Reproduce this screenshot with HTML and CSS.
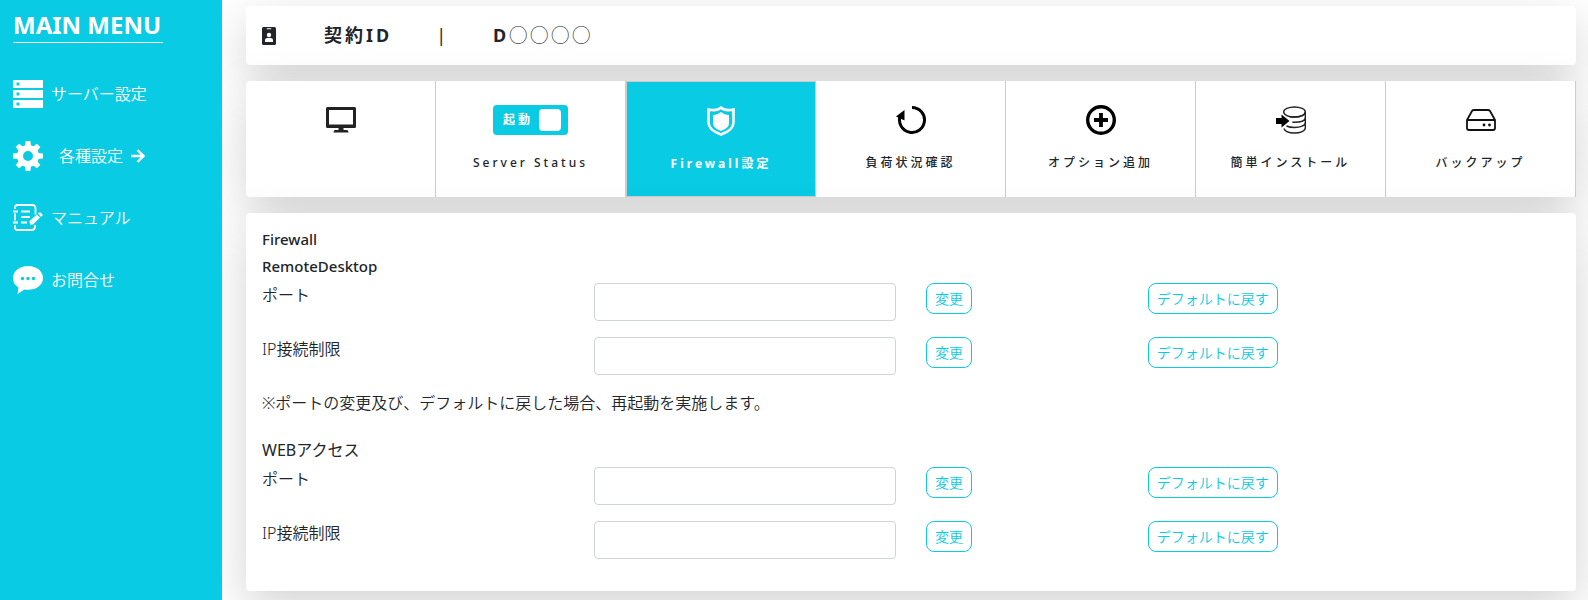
FILE: index.html
```html
<!DOCTYPE html>
<html lang="ja">
<head>
<meta charset="utf-8">
<meta name="viewport" content="width=device-width, initial-scale=1">
<title>Firewall設定</title>
<link rel="stylesheet" href="styles.css">
</head>
<body>
<div class="layout">
  <nav class="sidebar">
    <h1 class="sidebar-title">MAIN MENU</h1>
    <ul class="menu">
      <li><a class="menu-link" href="#">
        <svg class="menu-icon" viewBox="0 0 30 30" fill="#fff"><path fill-rule="evenodd" d="M0 1h30v8H0zM3.500 3.500v3h3v-3zM0 11h30v8H0zM3.500 13.500v3h3v-3zM0 21h30v8H0zM3.500 23.500v3h3v-3z"/></svg>
        <span>サーバー設定</span></a></li>
      <li><a class="menu-link" href="#">
        <svg class="menu-icon" viewBox="0 0 30 30"><g fill="#fff"><circle cx="15" cy="15" r="11"/><path id="tooth" d="M12 5L12.600 0h4.800L18 5v20l-.6 5h-4.800L12 25z"/><use href="#tooth" transform="rotate(45 15 15)"/><use href="#tooth" transform="rotate(90 15 15)"/><use href="#tooth" transform="rotate(135 15 15)"/></g><circle cx="15" cy="15" r="5" fill="#0acbe4"/></svg>
        <span class="menu-sub">各種設定</span>
        <svg class="menu-arrow" viewBox="0 0 14 14" fill="none" stroke="#fff" stroke-width="2.300"><path d="M0 7h12.500M6.500 1l6 6-6 6"/></svg></a></li>
      <li><a class="menu-link" href="#">
        <svg class="menu-icon" viewBox="0 0 30 30" fill="none" stroke="#fff" stroke-width="1.800"><path d="M2 6V4.500Q2 2 4.500 2h15Q22 2 22.500 5v6.500M2 10.500v7M2 22v2.500Q2 27 4.500 27H19q2.500 0 3-3v-2M0 8.500h5M0 19.500h5M8 8.500h9M8 14h9M8 19.500h6"/><path stroke="none" fill="#fff" d="M17 21.500L16.500 18l7.500-6.500 3 3-7 7zM25 10.500l2-1.500 3 3-2 2z"/></svg>
        <span>マニュアル</span></a></li>
      <li><a class="menu-link" href="#">
        <svg class="menu-icon" viewBox="0 0 30 30"><path fill="#fff" d="M15 1C6.500 1 0 6 0 13c0 4.500 2.200 7.500 5.500 9.500L4.500 29l7-4.500c1 .2 2.200.3 3.500.3 8.500 0 15-4.800 15-11.800S23.500 1 15 1z"/><g fill="#0acbe4"><circle cx="9.500" cy="13.500" r="1.700"/><circle cx="15" cy="13.500" r="1.700"/><circle cx="20.500" cy="13.500" r="1.700"/></g></svg>
        <span>お問合せ</span></a></li>
    </ul>
  </nav>

  <main class="main">
    <header class="card contract">
      <svg class="contract-icon" viewBox="0 0 14 18"><rect width="14" height="18" rx="1.500" fill="#212529"/><path fill="#fff" d="M4.800 1.300h4.400v1H4.800zM3 15v-1.500c0-1.800 1-2.500 2.500-2.500h3c1.500 0 2.500.7 2.500 2.500V15z"/><circle cx="7" cy="8" r="2.200" fill="#fff"/></svg>
      <span>契約ID</span>
      <span class="contract-bar">|</span>
      <span>D<span class="contract-mask">◯◯◯◯</span></span>
    </header>

    <div class="card tabs">
      <a class="tab" href="#" aria-label="デスクトップ">
        <svg class="tab-icon" viewBox="0 0 30 30"><path fill="#222" fill-rule="evenodd" d="M1.500 2h27Q30 2 30 3.500v18Q30 23 28.500 23H17.500v2H21q1.500 0 1.500 2.500h-15Q7.500 25 9 25h3.500v-2H1.500Q0 23 0 21.500v-18Q0 2 1.500 2zM3 5v14.500h24V5z"/></svg>
      </a>
      <div class="tab">
        <label class="toggle"><span>起動</span><input class="toggle-knob" type="checkbox" checked></label>
        <span class="tab-label">Server Status</span>
      </div>
      <a class="tab tab-active" href="#">
        <svg class="tab-icon" viewBox="0 0 30 30"><path fill="none" stroke="#fff" stroke-width="2.600" d="M15 1.500C12.500 4 7 4.500 2.500 3.500v13c0 6 5.500 9.500 12.500 12 7-2.500 12.500-6 12.500-12v-13C23 4.500 17.500 4 15 1.500z"/><path fill="#fff" d="M15 6c-2.500 2-5 3-8 3v8.500c0 3.500 3.500 5.500 8 7.500 4.500-2 8-4 8-7.500V9c-3 0-5.500-1-8-3z"/></svg>
        <span class="tab-label">Firewall設定</span>
      </a>
      <a class="tab" href="#">
        <svg class="tab-icon" viewBox="0 0 30 30"><path fill="none" stroke="#000" stroke-width="3" d="M16 2.500A12.500 12.500 0 1 1 4 11.500"/><path d="M0 11.500L8.500 5v10.500z"/></svg>
        <span class="tab-label">負荷状況確認</span>
      </a>
      <a class="tab" href="#">
        <svg class="tab-icon" viewBox="0 0 30 30" fill="none" stroke="#000"><circle cx="15" cy="15" r="13.300" stroke-width="3.400"/><path stroke-width="3.800" d="M8 15h14M15 8v14"/></svg>
        <span class="tab-label">オプション追加</span>
      </a>
      <a class="tab" href="#">
        <svg class="tab-icon" viewBox="0 0 30 30" fill="none" stroke="#222" stroke-width="1.400"><ellipse cx="18.500" cy="7" rx="10.800" ry="5"/><path d="M29.300 7v16c0 2.800-4.800 5-10.800 5-5 0-9.500-1.600-10.600-4.500M29.300 12.500c0 3-4.800 4.800-11 4.800h-2M29.300 17.500c0 3-4.800 5-10.800 5-3.500 0-6-.6-8-1.500M14 12h5c6-.3 10.300-2 10.300-5"/><path fill="#000" stroke="none" d="M0 13h5.500V9.500l8 6.500-8 6.500V19H0z"/></svg>
        <span class="tab-label">簡単インストール</span>
      </a>
      <a class="tab" href="#">
        <svg class="tab-icon" viewBox="0 0 30 30" fill="none" stroke="#111" stroke-width="1.800" stroke-linejoin="round"><path d="M1 15L6 6q.7-1 2-1h14q1.300 0 2 1l5 9v8q0 2-2 2H3q-2 0-2-2zM1 15h28"/><g fill="#111" stroke="none"><circle cx="18" cy="20" r="1.400"/><circle cx="23.500" cy="20" r="1.400"/></g></svg>
        <span class="tab-label">バックアップ</span>
      </a>
    </div>

    <section class="card settings">
      <h2 class="heading heading-latin">Firewall</h2>
      <h3 class="heading heading-latin">RemoteDesktop</h3>
      <form class="row">
        <label for="rd-port">ポート</label>
        <div><input class="field" id="rd-port" type="text"></div>
        <div><button class="btn" type="button">変更</button></div>
        <div><button class="btn" type="button">デフォルトに戻す</button></div>
      </form>
      <form class="row">
        <label for="rd-ip">IP接続制限</label>
        <div><input class="field" id="rd-ip" type="text"></div>
        <div><button class="btn" type="button">変更</button></div>
        <div><button class="btn" type="button">デフォルトに戻す</button></div>
      </form>
      <p class="note">※ポートの変更及び、デフォルトに戻した場合、再起動を実施します。</p>
      <h3 class="heading">WEBアクセス</h3>
      <form class="row">
        <label for="web-port">ポート</label>
        <div><input class="field" id="web-port" type="text"></div>
        <div><button class="btn" type="button">変更</button></div>
        <div><button class="btn" type="button">デフォルトに戻す</button></div>
      </form>
      <form class="row">
        <label for="web-ip">IP接続制限</label>
        <div><input class="field" id="web-ip" type="text"></div>
        <div><button class="btn" type="button">変更</button></div>
        <div><button class="btn" type="button">デフォルトに戻す</button></div>
      </form>
    </section>
  </main>
</div>
</body>
</html>
```
FILE: styles.css
```css
:root {
  --accent: #0acbe4;
  --ink: #212529;
}

* { box-sizing: border-box; }

body {
  margin: 0;
  background: #fff;
  color: var(--ink);
  font-family: "Noto Sans", "Noto Sans CJK JP", sans-serif;
  font-size: 16px;
  line-height: 24px;
}

a { color: inherit; text-decoration: none; }

.layout { display: flex; min-height: 100vh; overflow: hidden; }

.sidebar {
  position: relative;
  flex: 0 0 222px;
  padding: 8px 13px;
  background: var(--accent);
  color: #fff;
}

.sidebar-title {
  width: 150px;
  margin: 0 0 36px;
  padding-bottom: 1px;
  border-bottom: 1px solid #fff;
  font-size: 24px;
  font-weight: 700;
  line-height: 33px;
  white-space: nowrap;
}

.menu {
  display: flex;
  flex-direction: column;
  gap: 32px;
  margin: 0;
  padding: 0;
  list-style: none;
}

.menu-link { display: flex; align-items: center; gap: 8px; font-weight: 350; }
.menu-icon { width: 30px; height: 30px; }
.menu-sub { margin-left: 8px; }
.menu-arrow { width: 14px; height: 14px; }

.main {
  flex: 1;
  display: flex;
  flex-direction: column;
  gap: 16px;
  min-width: 0;
  padding: 6px 12px 8px 24px;
}

.card {
  border-radius: 4px;
  background: #fff;
  box-shadow: 0 16px 48px rgba(0, 0, 0, .175);
}

.contract {
  display: flex;
  align-items: center;
  gap: 44px;
  padding: 16px;
  font-size: 18px;
  font-weight: 700;
  line-height: 27px;
  letter-spacing: 3px;
}

.contract-icon { width: 14px; height: 18px; margin-right: 4px; }
.contract-bar { font-weight: 400; }
.contract-mask { font-weight: 500; }

.tabs { display: grid; grid-template-columns: repeat(7, 1fr); }

.tab {
  display: flex;
  flex-direction: column;
  align-items: center;
  gap: 18px;
  padding: 24px 8px;
  border-right: 1px solid #ccc;
}

.tab-active {
  padding-bottom: 22px;
  border: 1px solid #ccc;
  background: var(--accent);
  color: #fff;
}

.tab-icon { width: 30px; height: 30px; }

.tab-label {
  font-size: 12px;
  font-weight: 500;
  line-height: 20px;
  letter-spacing: 3px;
  white-space: nowrap;
}

.tab-active .tab-label { font-weight: 700; }

.toggle {
  display: flex;
  align-items: center;
  justify-content: space-between;
  width: 75px;
  height: 30px;
  padding: 0 7px 0 10px;
  border-radius: 4px;
  background: var(--accent);
  color: #fff;
  font-size: 12px;
  font-weight: 700;
  letter-spacing: 3px;
}

.toggle-knob {
  appearance: none;
  width: 22px;
  height: 22px;
  margin: 0;
  border-radius: 4px;
  background: #fff;
}

.settings { padding: 16px 0; }

.heading {
  margin: 0 16px 7px;
  font-size: 16px;
  font-weight: 400;
  line-height: 20px;
}

.heading-latin { font-size: 15px; font-weight: 500; }

.row {
  display: grid;
  grid-template-columns: 3fr 3fr 2fr 4fr;
  margin-bottom: 16px;
  font-weight: 350;
}

.row > * { padding: 0 15px; }
.row > label { padding-left: 16px; }

.field {
  display: block;
  width: 100%;
  height: 38px;
  padding: 6px 12px;
  border: 1px solid #ced4da;
  border-radius: 4px;
  background: #fff;
  font: inherit;
}

.btn {
  display: block;
  padding: 4px 8px;
  border: 1px solid var(--accent);
  border-radius: 8px;
  background: #fff;
  color: var(--accent);
  font-family: inherit;
  font-size: 14px;
  font-weight: 350;
  line-height: 21px;
  white-space: nowrap;
}

.note { margin: 0 16px 25px; font-weight: 350; }
```
